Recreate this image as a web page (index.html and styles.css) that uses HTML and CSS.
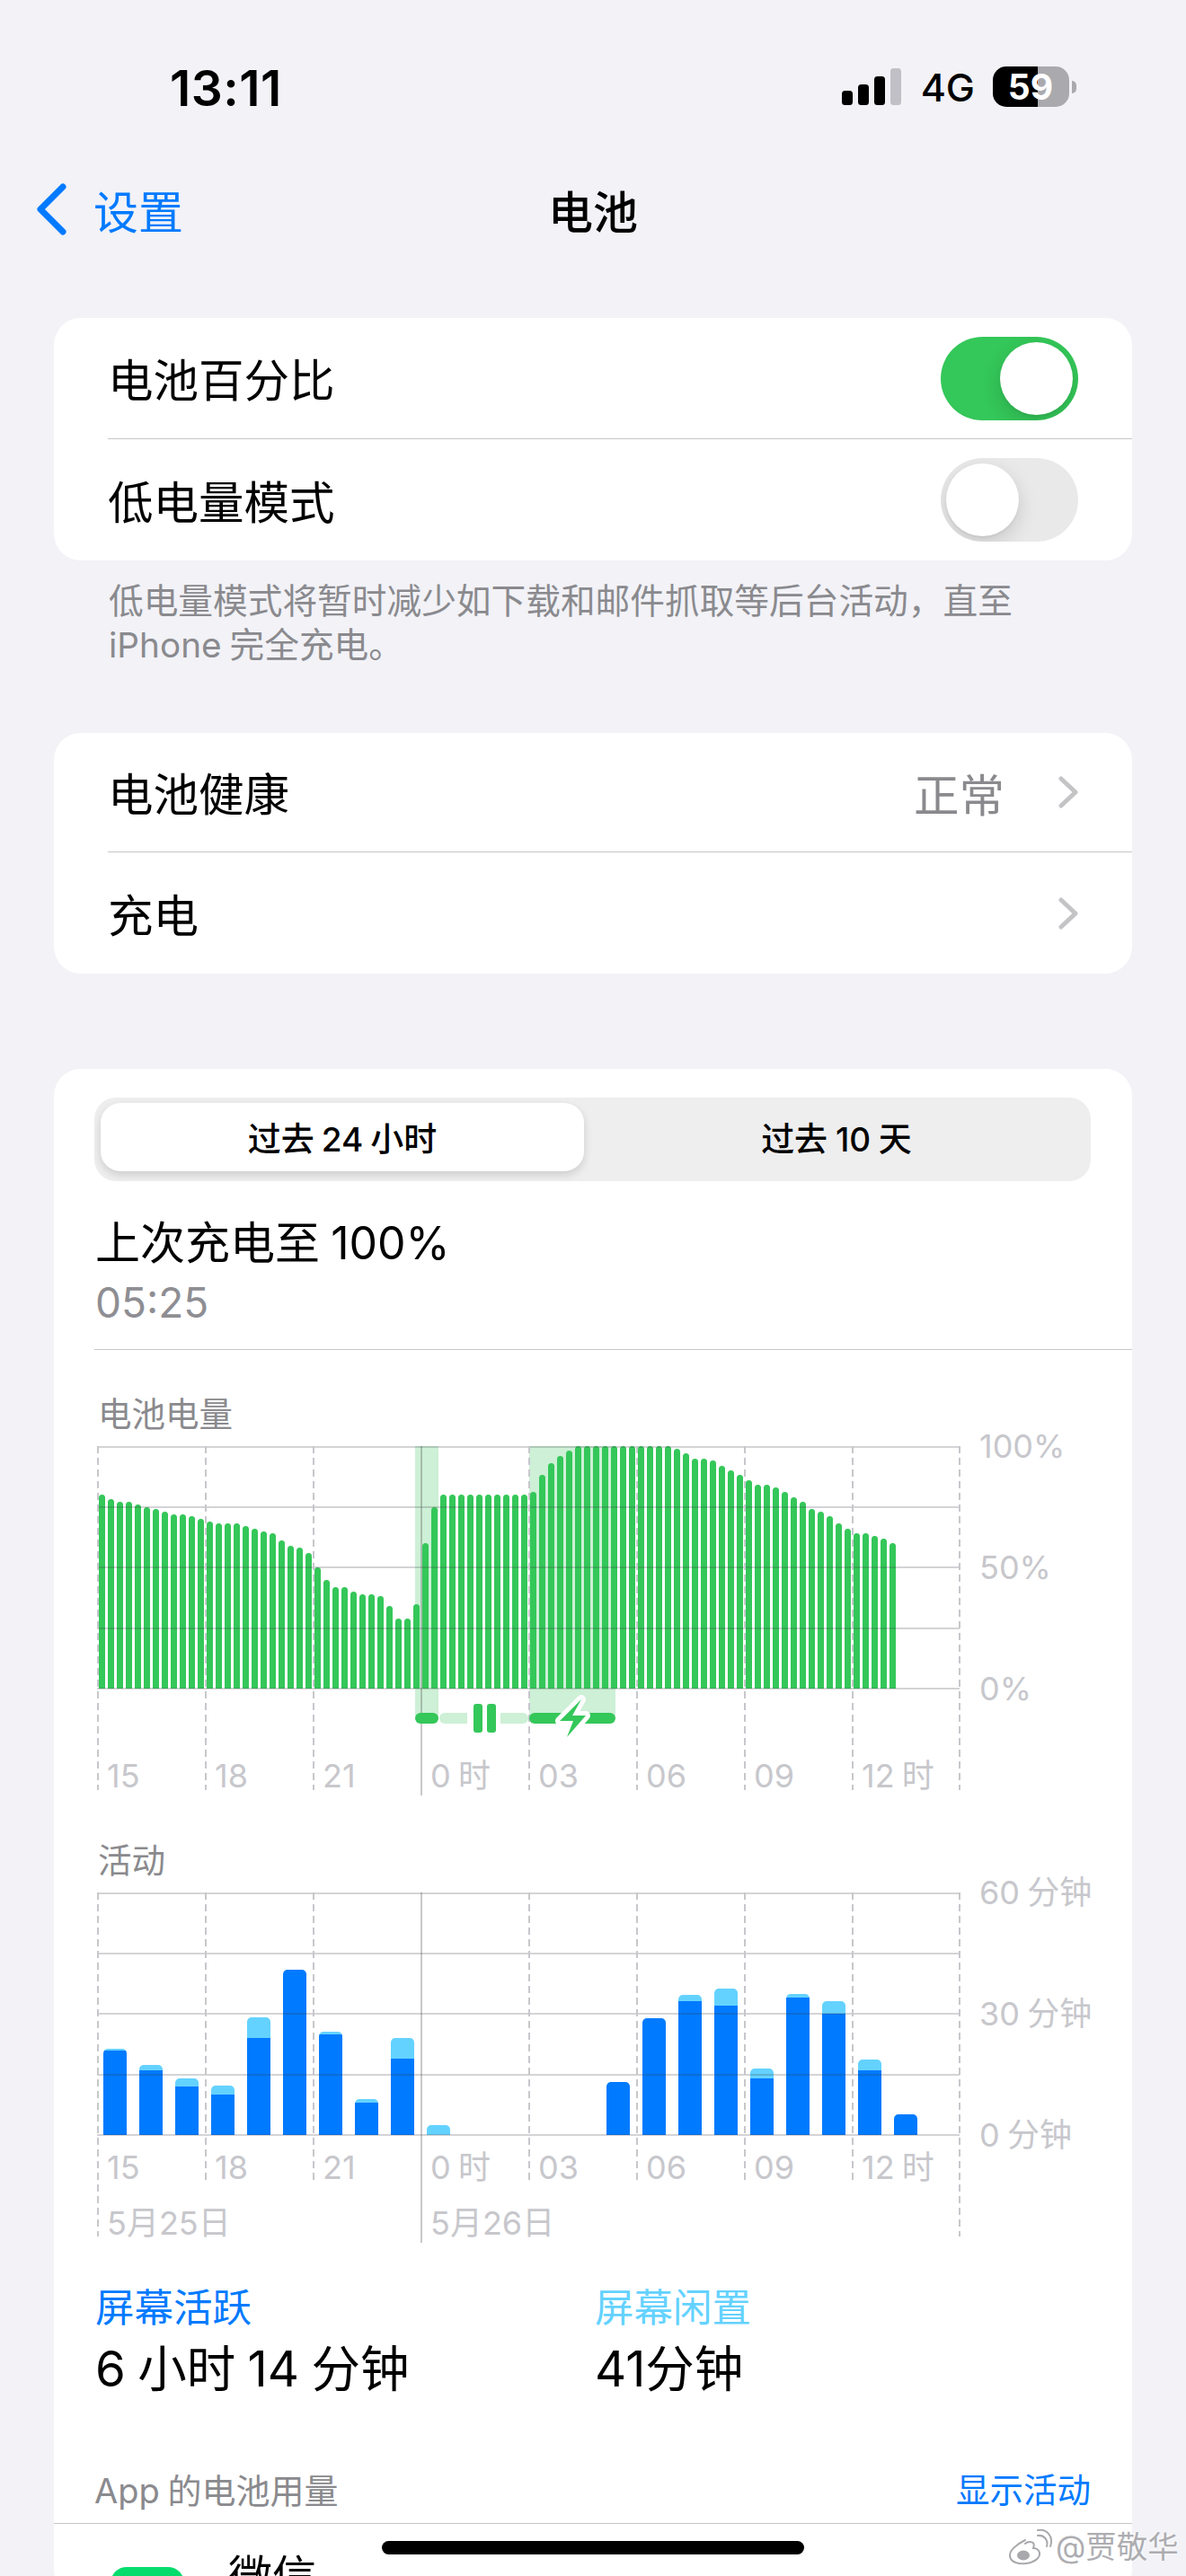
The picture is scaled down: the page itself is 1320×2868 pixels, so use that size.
FILE: index.html
```html
<!DOCTYPE html>
<html lang="zh-CN">
<head>
<meta charset="utf-8">
<title>电池</title>
<link rel="stylesheet" href="styles.css">
</head>
<body>
<header class="statusbar">
  <div class="clock">13:11</div>
  <div class="status-right">
    <div class="signal"><i class="s1"></i><i class="s2"></i><i class="s3"></i><i class="s4"></i></div>
    <div class="net">4G</div>
    <div class="battery"><div class="battery-body"><span>59</span></div><div class="battery-nub"></div></div>
  </div>
</header>
<nav class="nav">
  <div class="back">
    <svg class="back-chevron" width="34" height="58" viewBox="0 0 34 58"><polyline points="30,4 5,29 30,54" fill="none" stroke="#007aff" stroke-width="7" stroke-linecap="round" stroke-linejoin="round"/></svg>
    <span>设置</span>
  </div>
  <div class="nav-title">电池</div>
  <div></div>
</nav>
<main>
  <section class="card card-first">
    <div class="row row-a"><span>电池百分比</span><div class="toggle on"><i></i></div></div>
    <div class="sep"></div>
    <div class="row row-b"><span>低电量模式</span><div class="toggle"><i></i></div></div>
  </section>
  <p class="footnote">低电量模式将暂时减少如下载和邮件抓取等后台活动，直至<br>iPhone 完全充电。</p>
  <section class="card card-second">
    <div class="row row-c"><span>电池健康</span><div class="row-end"><span class="value">正常</span><svg class="chev" width="22" height="36" viewBox="0 0 22 36"><polyline points="3,3 19,18 3,33" fill="none" stroke="#c4c4c7" stroke-width="5" stroke-linecap="round" stroke-linejoin="round"/></svg></div></div>
    <div class="sep"></div>
    <div class="row row-b"><span>充电</span><div class="row-end"><svg class="chev" width="22" height="36" viewBox="0 0 22 36"><polyline points="3,3 19,18 3,33" fill="none" stroke="#c4c4c7" stroke-width="5" stroke-linecap="round" stroke-linejoin="round"/></svg></div></div>
  </section>
  <section class="card card-usage">
    <div class="segmented">
      <div class="seg seg-active">过去 24 小时</div>
      <div class="seg seg-other">过去 10 天</div>
    </div>
    <div class="last-charge">
      <div class="lc-title">上次充电至 100%</div>
      <div class="lc-time">05:25</div>
    </div>
    <div class="full-sep"></div>

    <div class="chart chart-battery">
      <div class="chart-title">电池电量</div>
      <div class="chart-body">
        <div class="plot">
          <div class="band band-a"></div>
          <div class="band band-b"></div>
          <div class="bars">
            <i style="height:216px"></i><i style="height:211px"></i><i style="height:208px"></i><i style="height:208px"></i><i style="height:205px"></i><i style="height:202px"></i><i style="height:200px"></i><i style="height:197px"></i><i style="height:194px"></i><i style="height:194px"></i><i style="height:192px"></i><i style="height:189px"></i>
            <i style="height:186px"></i><i style="height:184px"></i><i style="height:184px"></i><i style="height:184px"></i><i style="height:181px"></i><i style="height:178px"></i><i style="height:175px"></i><i style="height:173px"></i><i style="height:165px"></i><i style="height:159px"></i><i style="height:157px"></i><i style="height:151px"></i>
            <i style="height:135px"></i><i style="height:121px"></i><i style="height:113px"></i><i style="height:113px"></i><i style="height:108px"></i><i style="height:105px"></i><i style="height:105px"></i><i style="height:103px"></i><i style="height:92px"></i><i style="height:78px"></i><i style="height:78px"></i><i style="height:94px"></i>
            <i style="height:162px"></i><i style="height:202px"></i><i style="height:216px"></i><i style="height:216px"></i><i style="height:216px"></i><i style="height:216px"></i><i style="height:216px"></i><i style="height:216px"></i><i style="height:216px"></i><i style="height:216px"></i><i style="height:216px"></i><i style="height:216px"></i>
            <i style="height:219px"></i><i style="height:238px"></i><i style="height:251px"></i><i style="height:259px"></i><i style="height:265px"></i><i style="height:270px"></i><i style="height:270px"></i><i style="height:270px"></i><i style="height:270px"></i><i style="height:270px"></i><i style="height:270px"></i><i style="height:270px"></i>
            <i style="height:270px"></i><i style="height:270px"></i><i style="height:270px"></i><i style="height:270px"></i><i style="height:267px"></i><i style="height:262px"></i><i style="height:256px"></i><i style="height:256px"></i><i style="height:254px"></i><i style="height:248px"></i><i style="height:243px"></i><i style="height:238px"></i>
            <i style="height:232px"></i><i style="height:227px"></i><i style="height:227px"></i><i style="height:224px"></i><i style="height:219px"></i><i style="height:213px"></i><i style="height:208px"></i><i style="height:200px"></i><i style="height:197px"></i><i style="height:192px"></i><i style="height:184px"></i><i style="height:178px"></i>
            <i style="height:173px"></i><i style="height:173px"></i><i style="height:170px"></i><i style="height:167px"></i><i style="height:162px"></i>
          </div>
          <svg class="grid" width="962" height="390" viewBox="0 0 962 390">
            <g class="h"><line x1="0" x2="960" y1="1" y2="1"/><line x1="0" x2="960" y1="68" y2="68"/><line x1="0" x2="960" y1="135" y2="135"/><line x1="0" x2="960" y1="203" y2="203"/><line x1="0" x2="960" y1="270" y2="270"/></g>
            <g class="v"><line x1="1" x2="1" y1="0" y2="383"/><line x1="121" x2="121" y1="0" y2="383"/><line x1="241" x2="241" y1="0" y2="383"/><line x1="481" x2="481" y1="0" y2="383"/><line x1="601" x2="601" y1="0" y2="383"/><line x1="721" x2="721" y1="0" y2="383"/><line x1="841" x2="841" y1="0" y2="383"/><line x1="960" x2="960" y1="0" y2="383"/></g>
            <line class="solid" x1="361" x2="361" y1="0" y2="389"/>
          </svg>
          <div class="pill pill-a"></div>
          <div class="pale pale-a"></div>
          <div class="pause"><i></i><i></i></div>
          <div class="pale pale-b"></div>
          <div class="pill pill-b"></div>
          <svg class="bolt" width="38" height="48" viewBox="0 0 38 48"><path d="M28 1 L4 25 L19 25 L12 43 L33 19 L18 19 Z" fill="#34c759" stroke="#fff" stroke-width="10" stroke-linejoin="round" paint-order="stroke"/></svg>
        </div>
        <div class="y-labels"><span>100%</span><span>50%</span><span>0%</span></div>
      </div>
      <div class="x-labels x-battery"><span>15</span><span>18</span><span>21</span><span>0 时</span><span>03</span><span>06</span><span>09</span><span>12 时</span></div>
    </div>

    <div class="chart chart-activity">
      <div class="chart-title">活动</div>
      <div class="chart-body">
        <div class="plot">
          <div class="act-bars">
            <div class="act"><b style="height:2px"></b><i style="height:94px"></i></div>
            <div class="act"><b style="height:6px"></b><i style="height:72px"></i></div>
            <div class="act"><b style="height:9px"></b><i style="height:54px"></i></div>
            <div class="act"><b style="height:10px"></b><i style="height:45px"></i></div>
            <div class="act"><b style="height:23px"></b><i style="height:108px"></i></div>
            <div class="act"><i style="height:184px"></i></div>
            <div class="act"><b style="height:3px"></b><i style="height:112px"></i></div>
            <div class="act"><b style="height:4px"></b><i style="height:36px"></i></div>
            <div class="act"><b style="height:23px"></b><i style="height:85px"></i></div>
            <div class="act"><b style="height:11px"></b></div>
            <div class="act"></div><div class="act"></div><div class="act"></div><div class="act"></div>
            <div class="act"><i style="height:59px"></i></div>
            <div class="act"><i style="height:130px"></i></div>
            <div class="act"><b style="height:7px"></b><i style="height:149px"></i></div>
            <div class="act"><b style="height:19px"></b><i style="height:144px"></i></div>
            <div class="act"><b style="height:11px"></b><i style="height:63px"></i></div>
            <div class="act"><b style="height:4px"></b><i style="height:153px"></i></div>
            <div class="act"><b style="height:14px"></b><i style="height:135px"></i></div>
            <div class="act"><b style="height:12px"></b><i style="height:72px"></i></div>
            <div class="act"><i style="height:23px"></i></div>
          </div>
          <svg class="grid" width="962" height="392" viewBox="0 0 962 392">
            <g class="h"><line x1="0" x2="960" y1="1" y2="1"/><line x1="0" x2="960" y1="68" y2="68"/><line x1="0" x2="960" y1="135" y2="135"/><line x1="0" x2="960" y1="203" y2="203"/><line x1="0" x2="960" y1="270" y2="270"/></g>
            <g class="v"><line x1="1" x2="1" y1="0" y2="383"/><line x1="121" x2="121" y1="0" y2="323"/><line x1="241" x2="241" y1="0" y2="323"/><line x1="481" x2="481" y1="0" y2="323"/><line x1="601" x2="601" y1="0" y2="323"/><line x1="721" x2="721" y1="0" y2="323"/><line x1="841" x2="841" y1="0" y2="323"/><line x1="960" x2="960" y1="0" y2="383"/></g>
            <line class="solid" x1="361" x2="361" y1="0" y2="390"/>
          </svg>
        </div>
        <div class="y-labels"><span>60 分钟</span><span>30 分钟</span><span>0 分钟</span></div>
      </div>
      <div class="x-labels x-activity"><span>15</span><span>18</span><span>21</span><span>0 时</span><span>03</span><span>06</span><span>09</span><span>12 时</span></div>
      <div class="date-labels"><span>5月25日</span><span>5月26日</span></div>
    </div>

    <div class="stats">
      <div class="stat stat-active"><div class="stat-label">屏幕活跃</div><div class="stat-value">6 小时 14 分钟</div></div>
      <div class="stat stat-idle"><div class="stat-label">屏幕闲置</div><div class="stat-value">41分钟</div></div>
    </div>
    <div class="usage-head"><span class="usage-title">App 的电池用量</span><span class="usage-link">显示活动</span></div>
    <div class="app-row"><div class="app-icon"></div><div class="app-name">微信</div></div>
  </section>
</main>
<div class="home-indicator"></div>
<div class="watermark">
  <svg width="52" height="42" viewBox="0 0 52 42"><g fill="none" stroke="#fff" stroke-width="5" stroke-linecap="round"><path d="M21 13 C11 18 3 25 4 31 C5 38 14 40 22 39 C31 38 38 33 37 27 C36 23 32 22 30 22 C32 17 30 15 26 15 C24 15 22 16 21 17"/><path d="M35 8 C42 7 47 13 45 20"/><path d="M35 2 C45 0 53 9 49 20"/></g><g fill="none" stroke="#a9a9ad" stroke-width="2" stroke-linecap="round"><path d="M21 13 C11 18 3 25 4 31 C5 38 14 40 22 39 C31 38 38 33 37 27 C36 23 32 22 30 22 C32 17 30 15 26 15 C24 15 22 16 21 17"/><path d="M35 8 C42 7 47 13 45 20"/><path d="M35 2 C45 0 53 9 49 20"/></g><ellipse cx="19" cy="30" rx="8" ry="6.5" fill="#a9a9ad" stroke="#fff" stroke-width="2"/></svg>
  <span>@贾敬华</span>
</div>
</body>
</html>
```

FILE: styles.css
```css
* { box-sizing: border-box; }
html, body { margin: 0; padding: 0; }
body {
  position: relative;
  width: 1320px;
  height: 2868px;
  overflow: hidden;
  background: #f2f2f7;
  color: #000;
  font-family: Inter, "Noto Sans CJK SC", "Noto Sans", sans-serif;
  word-spacing: -0.12em;
}

/* status bar */
.statusbar {
  height: 168px;
  padding: 74px 122px 0 189px;
  display: flex;
  justify-content: space-between;
  align-items: flex-start;
}
.clock { font-size: 55px; line-height: 48px; font-weight: 600; letter-spacing: .5px; }
.status-right { display: flex; align-items: flex-start; }
.signal { display: flex; align-items: flex-end; gap: 6.5px; height: 43px; margin-right: 22px; }
.signal i { display: block; width: 11.5px; border-radius: 3.5px; background: #000; }
.signal .s1 { height: 16px; }
.signal .s2 { height: 23px; }
.signal .s3 { height: 32px; }
.signal .s4 { height: 41px; background: #c0c0c6; }
.net { font-size: 43px; line-height: 46px; font-weight: 500; margin-right: 20px; }
.battery { display: flex; align-items: center; height: 45px; gap: 3px; }
.battery-body {
  width: 85px; height: 45px; border-radius: 15px;
  background: linear-gradient(90deg, #000 0 50px, #aaaaae 50px);
  color: #fff; font-size: 39px; line-height: 45px; font-weight: 700;
  display: flex; justify-content: center;
}
.battery-body span { margin-left: -1px; }
.battery-nub { width: 5px; height: 14px; border-radius: 0 7px 7px 0; background: #aaaaae; }

/* navigation */
.nav {
  height: 130px;
  display: grid;
  grid-template-columns: 1fr auto 1fr;
  align-items: center;
}
.back { display: flex; align-items: center; gap: 30px; padding-left: 40px; color: #007aff; font-size: 50px; }
.back-chevron { display: block; }
.nav-title { font-size: 50px; font-weight: 500; }

/* cards */
main { margin-top: 56px; }
.card { margin: 0 60px; background: #fff; border-radius: 30px; }
.row {
  display: flex; justify-content: space-between; align-items: center;
  padding: 0 60px; font-size: 50.5px;
}
.row-a { height: 134px; }
.row-b { height: 135px; }
.row-c { height: 132px; }
.row > span { position: relative; top: -1px; }
.sep { height: 1px; margin-left: 60px; background: #c6c6c8; }
.row-end { display: flex; align-items: center; }
.value { color: #8a8a8e; margin-right: 60px; }
.chev { display: block; }

.toggle {
  position: relative; width: 153px; height: 93px; border-radius: 46.5px;
  background: #e9e9ea; overflow: hidden;
}
.toggle i {
  position: absolute; top: 6px; left: 6px; width: 81px; height: 81px;
  border-radius: 50%; background: #fff;
  box-shadow: 0 8px 22px rgba(0,0,0,.14), 0 2px 3px rgba(0,0,0,.05);
}
.toggle.on { background: #34c759; }
.toggle.on i { left: 66px; }

.footnote {
  margin: 21px 0 0; padding: 0 100px 0 121px;
  color: #8a8a8e; font-size: 38.7px; line-height: 49px;
  height: 171px;
}

.card-second { margin-bottom: 106px; }
.card-usage { padding-top: 32px; height: 1700px; }

.segmented {
  margin: 0 46px 0 45px; height: 93px; padding: 6px 7px;
  background: #eeeeef; border-radius: 24px;
  display: flex;
}
.seg {
  flex: 1 1 0; display: flex; align-items: center; justify-content: center;
  font-size: 37px; font-weight: 500; border-radius: 22px; margin-bottom: 5px;
}
.seg-active { flex: 0 0 538px; background: #fff; box-shadow: 0 4px 10px rgba(0,0,0,.14); }
.seg-other { padding-left: 5px; word-spacing: -0.03em; }

.last-charge { padding: 36px 0 0 46px; }
.lc-title { font-size: 50px; line-height: 66px; }
.lc-time { font-size: 46px; line-height: 66px; color: #8e8e93; }
.full-sep { height: 1px; margin: 19px 0 0 45px; background: #c6c6c8; }

/* charts */
.chart { margin-left: 48px; }
.chart-title { font-size: 37.5px; line-height: 50px; color: #8a8a8e; margin-bottom: 10px; padding-left: 1px; }
.chart-battery { padding-top: 47px; }
.chart-activity { padding-top: 45px; }
.chart-body { display: flex; align-items: flex-start; gap: 22px; }
.plot { position: relative; flex: 0 0 960px; height: 270px; }
.grid { position: absolute; left: 0; top: 0; overflow: visible; }
.grid line { stroke-width: 2; }
.grid .h line { stroke: rgba(60,60,67,.22); }
.grid .v line { stroke: #c7c7cc; stroke-dasharray: 8 5; }
.grid .solid { stroke: rgba(60,60,67,.28); }

.bars { position: absolute; left: 1.5px; bottom: 0; display: flex; align-items: flex-end; gap: 3px; }
.bars i { display: block; width: 7px; background: #34c759; border-radius: 3.5px 3.5px 0 0; }

.band { position: absolute; top: 0; height: 303px; background: #cdf0d6; }
.band-a { left: 354px; width: 26px; }
.band-b { left: 481px; width: 96px; }
.pill { position: absolute; top: 297px; height: 12px; border-radius: 6px; background: #34c759; }
.pill-a { left: 354px; width: 26px; }
.pill-b { left: 481px; width: 96px; }
.pale { position: absolute; top: 297px; height: 12px; background: #cdf0d6; }
.pale-a { left: 381px; width: 31px; border-radius: 6px 0 0 6px; }
.pale-b { left: 449px; width: 31px; border-radius: 0 6px 6px 0; }
.pause { position: absolute; left: 419px; top: 287px; display: flex; gap: 5px; }
.pause i { display: block; width: 10px; height: 32px; border-radius: 3px; background: #34c759; }
.bolt { position: absolute; left: 511px; top: 281px; overflow: visible; }

.y-labels { height: 270px; display: flex; flex-direction: column; justify-content: space-between; }
.y-labels span {
  display: block; height: 0; line-height: 0;
  font-size: 36px; color: #c7c7cc; white-space: nowrap;
}

.x-labels { display: grid; grid-template-columns: repeat(8, 120px); font-size: 36px; line-height: 50px; color: #c7c7cc; }
.x-labels span { padding-left: 11px; }
.x-battery { margin-top: 72px; }
.x-activity { margin-top: 11px; }
.date-labels { display: grid; grid-template-columns: 360px 1fr; margin-top: 12px; font-size: 36px; line-height: 50px; color: #c7c7cc; }
.date-labels span { padding-left: 11px; }

.act-bars { position: absolute; left: 6.5px; bottom: 0; display: flex; align-items: flex-end; gap: 13.5px; }
.act { width: 26.5px; border-radius: 5px 5px 0 0; overflow: hidden; display: flex; flex-direction: column; }
.act b { display: block; background: #64d2ff; }
.act i { display: block; background: #007aff; }

/* summary */
.stats { display: flex; margin-top: 40px; padding-left: 46px; }
.stat { flex: 0 0 556px; }
.stat-label { font-size: 43.5px; line-height: 58px; }
.stat-active .stat-label { color: #007aff; }
.stat-idle .stat-label { color: #64d2ff; }
.stat-value { font-size: 54.5px; line-height: 78px; font-weight: 400; }

.usage-head {
  display: flex; justify-content: space-between; align-items: center;
  height: 62px; margin-top: 72px; padding: 0 46px 12px 45px;
  border-bottom: 1px solid #c6c6c8; font-size: 38px; line-height: 50px;
}
.usage-title { color: #8a8a8e; }
.usage-link { color: #007aff; font-size: 37.5px; }

.app-row { display: flex; align-items: flex-start; padding-left: 63px; }
.app-icon { width: 82px; height: 82px; margin-top: 48px; border-radius: 18px; background: #05dc6c; }
.app-name { margin: 34px 0 0 49px; font-size: 49px; line-height: 50px; }

/* overlays */
.home-indicator {
  position: absolute; left: 425px; top: 2829px;
  width: 470px; height: 15px; border-radius: 7.5px; background: #000;
}
.watermark {
  position: absolute; left: 1120px; top: 2815px;
  display: flex; align-items: center; gap: 3px;
  color: #adadb1; font-size: 34.5px; line-height: 42px; white-space: nowrap;
  text-shadow: 0 0 3px #fff, 0 0 3px #fff;
}
.watermark svg { display: block; }
```
